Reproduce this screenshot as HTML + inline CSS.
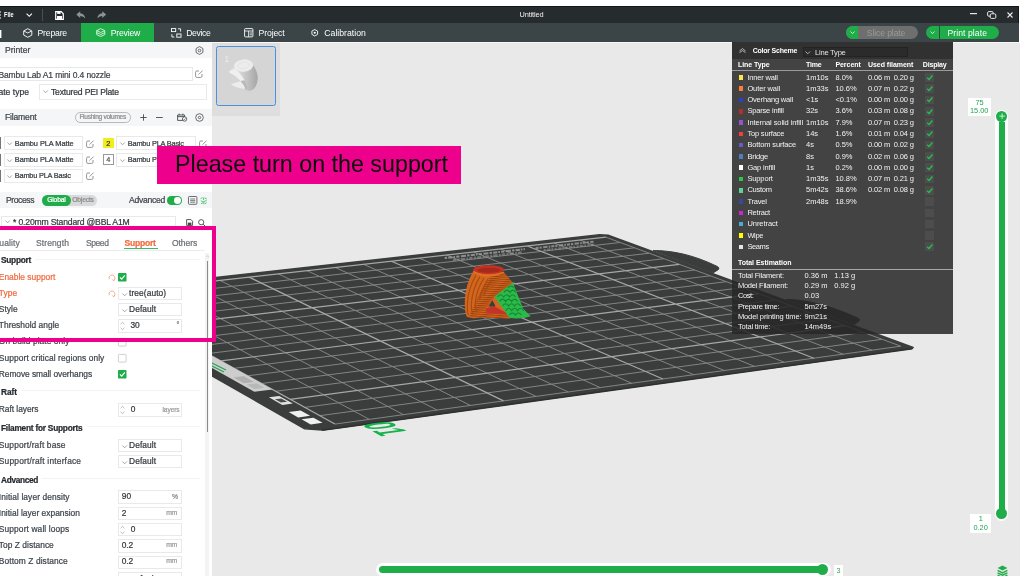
<!DOCTYPE html>
<html lang="en"><head><meta charset="utf-8"><title>Untitled - Bambu Studio</title>
<style>
html,body{margin:0;padding:0}
body{width:1024px;height:576px;overflow:hidden;background:#fff;position:relative;font-family:"Liberation Sans",sans-serif;}
header,aside,main,section,footer{position:absolute;left:0;top:0;width:0;height:0;will-change:transform}
div,svg,.t{position:absolute}
svg{overflow:visible}
.t{white-space:nowrap;line-height:1}
aside .t{-webkit-text-stroke:0.22px currentColor}
#clip{left:0;top:0;width:1024px;height:576px;overflow:hidden}
</style></head><body><div id="clip">
<main><div style="left:211.6px;top:42.2px;width:808px;height:534px;background:#e9e9e9"></div>
<div style="left:211.6px;top:42.2px;width:808px;height:0.9px;background:#f6f6f6"></div>
<div style="left:211.6px;top:43px;width:68.8px;height:72.6px;background:#dedede"></div>
<div style="left:215.6px;top:46.2px;width:60.2px;height:60px;background:#d5d5d5;border:1.7px solid #4a90e2;border-radius:2.5px;box-sizing:border-box"></div>
<svg style="left:0;top:0" width="300" height="120" viewBox="0 0 300 120"><defs><linearGradient id="tg" x1="0" y1="0" x2="1" y2="0"><stop offset="0" stop-color="#e2e2e2"/><stop offset="0.45" stop-color="#d2d2d2"/><stop offset="1" stop-color="#a6a6a6"/></linearGradient></defs>
<path d="M234 66 L228.6 72 Q236 75.6 240.6 81 L231 84.2 Q236 88.4 243 88.6 Q247 91.4 251 90.6 Q256.4 88.4 257.6 80 Q258.4 72 253 65 Z" fill="url(#tg)"/>
<path d="M228.6 72 L234.4 68.4 Q241 73 244.6 80.6 L240.6 81 Q236 75.6 228.6 72 Z" fill="#efefef"/>
<path d="M231 84.2 L240.6 81 Q244 84.4 245.4 88.8 Q237 88.6 231 84.2 Z" fill="#ececec"/>
<path d="M240.6 81 L244.6 80.6 Q247 84.6 247.4 89.6 L245.4 88.8 Q244 84.4 240.6 81 Z" fill="#b9b9b9"/>
<ellipse cx="243.6" cy="65.6" rx="9.6" ry="6.2" transform="rotate(-4 243.6 65.6)" fill="#ececec"/>
<ellipse cx="243.6" cy="65.4" rx="5.4" ry="3.2" transform="rotate(-4 243.6 65.4)" fill="none" stroke="#e2e2e2" stroke-width="0.8"/></svg>
<svg style="left:0;top:0" width="1024" height="576" viewBox="0 0 1024 576"><path d="M75.0 293.2 L599.6 234.9 L608.7 235.4 L913.1 347.5 L912.3 348.3 L322.1 429.9 L304.8 428.7 L70.4 295.4 Z" fill="#3b3d3d" stroke="#3b3d3d" stroke-width="1.6" stroke-linejoin="round"/><path d="M322.1 430.3 L912.3 348.7" stroke="#2f3131" stroke-width="1.6"/><path d="M653 250.6 C670 250.4 692 254 717.6 266.6 Q719.6 267.6 718.6 269.4 L713 273 Z" fill="#3b3d3d" stroke="#3b3d3d" stroke-width="1" stroke-linejoin="round"/><path d="M786 299.4 C806 299.4 832 306 858 318.2 Q860.4 319.2 859 321 L854.4 324.6 Z" fill="#3b3d3d" stroke="#3b3d3d" stroke-width="1" stroke-linejoin="round"/><path d="M130.3 290.4 L369.4 419.4 M111.1 300.0 L620.2 242.5 M160.4 287.0 L403.5 414.7 M122.4 306.3 L634.6 247.8 M190.3 283.7 L437.2 410.1 M134.0 312.7 L649.2 253.2 M219.9 280.4 L470.5 405.5 M145.8 319.2 L664.1 258.7 M278.1 273.8 L536.0 396.4 M169.9 332.6 L694.7 270.0 M306.9 270.6 L568.3 392.0 M182.3 339.5 L710.3 275.8 M335.3 267.5 L600.2 387.6 M194.9 346.5 L726.2 281.7 M363.5 264.3 L631.7 383.3 M207.8 353.6 L742.3 287.7 M419.1 258.1 L693.7 374.7 M234.2 368.3 L775.5 299.9 M446.5 255.0 L724.3 370.5 M247.8 375.8 L792.4 306.2 M473.7 252.0 L754.5 366.4 M261.6 383.5 L809.7 312.6 M500.6 249.0 L784.3 362.3 M275.7 391.3 L827.3 319.1 M553.8 243.0 L843.2 354.2 M304.7 407.4 L863.4 332.4 M580.0 240.1 L872.1 350.2 M319.7 415.7 L881.9 339.3 M605.9 237.2 L900.8 346.2 M334.9 424.1 L900.8 346.2" fill="none" stroke="#868888" stroke-width="0.95"/><path d="M99.9 293.8 L334.9 424.1 M99.9 293.8 L605.9 237.2 M249.1 277.1 L503.5 400.9 M157.7 325.9 L679.3 264.3 M391.4 261.2 L662.9 379.0 M220.9 360.9 L758.8 293.7 M527.3 246.0 L813.9 358.2 M290.1 399.3 L845.2 325.7" fill="none" stroke="#a6a8a8" stroke-width="1.2"/><path d="M189.9 355.5 L207.3 353.3 L272.4 389.4 L254.3 391.8 Z" fill="#cdcdcd"/><path d="M233.5 377.4 L243.6 376.1 L254.0 381.9 L243.8 383.2 Z" fill="#b0b0b0"/><path d="M246.4 384.6 L256.6 383.3 L264.5 387.7 L254.2 389.1 Z" fill="#b8b8b8"/><path d="M268.9 397.3 L279.2 395.9 L292.9 403.5 L282.4 404.9 Z" fill="#e2e2e2"/><path d="M274.9 399.3 L281.3 398.4 L287.3 401.8 L280.8 402.6 Z" fill="#4a4c4c"/><path d="M288.7 412.1 L300.6 410.5 L310.1 415.8 L298.2 417.4 Z" fill="#f0f0f0"/><path d="M301.6 419.3 L313.5 417.7 L322.6 422.8 L310.7 424.5 Z" fill="#f0f0f0"/><path d="M211 362.6 L226 370 M211 365.6 L224 372" stroke="#22a24e" stroke-width="1.1"/><path d="M444.7 258.1 L524.9 249.1" stroke="#a2a4a4" stroke-width="2" stroke-dasharray="2.4 1.2 4.2 1 1.6 1.2 3.2 1.6 5 1.2" opacity="0.8"/><path d="M452.9 260.1 L522.9 252.2" stroke="#a2a4a4" stroke-width="2" stroke-dasharray="3.4 1.4 2 1 4.4 1.4 1.6 1.2" opacity="0.55"/><path d="M535.6 248.2 L593.5 241.7" stroke="#a2a4a4" stroke-width="2" stroke-dasharray="3 1 2.2 1.4 4.4 1.2 1.6 1" opacity="0.75"/><path d="M543.8 250.1 L594.3 244.5" stroke="#a2a4a4" stroke-width="2" stroke-dasharray="2 1.2 3.6 1 1.6 1.6" opacity="0.5"/><text transform="matrix(0.95 0.55 -2.05 0.27 360.6 424.4)" x="0" y="0" font-family="Liberation Sans, sans-serif" font-size="20" font-weight="700" fill="#14b24c">01</text></svg>
<svg style="left:0;top:0" width="1024" height="576" viewBox="0 0 1024 576">
<defs>
<pattern id="st" width="4" height="2.15" patternUnits="userSpaceOnUse" patternTransform="rotate(4)"><rect width="4" height="1.05" fill="#8f3a0c"/></pattern>
<clipPath id="cr"><path d="M490 276 L504 272.6 L513.2 283.2 L494.4 296.8 L486 308.4 L486.4 313.6 L509.4 314.4 L510 318.6 L480 317.6 L469 317.4 L474.6 304 L482 289 Z"/></clipPath>
</defs>
<path d="M473.6 270.6 Q465.4 285 464.8 300 Q464.6 312 466.6 316.6 Q471 319.4 480 317.6 L510 318.6 L513.4 283.6 L504 272.4 Z" fill="#d2661f"/>
<g clip-path="url(#cr)"><rect x="460" y="268" width="60" height="54" fill="url(#st)" opacity="0.8"/></g>
<path d="M476 275 Q468.4 288 467.4 303 Q467 311 468.4 315 M480 276.6 Q472.4 289 471.4 303 Q471 310 472.6 314 M484 278 Q476.4 290 475.4 302 Q475 308 476.6 311 M488 279 Q480.6 291 479.6 300 M492 279.4 Q485 289 484 296" fill="none" stroke="#a84a10" stroke-width="1.1"/>
<ellipse cx="488.6" cy="269.6" rx="15.4" ry="4.3" fill="#c6321f"/>
<ellipse cx="488.8" cy="270.2" rx="11.6" ry="2.5" fill="#a52a1c"/>
<path d="M473.4 271.6 Q488 279.6 504 272.2" fill="none" stroke="#dd7428" stroke-width="1.3"/>
<path d="M485.8 308.6 L493.8 306 L509.4 314.4 L486.4 313.6 Z" fill="#c5322a"/>
<path d="M492.4 300.2 L495.6 306.2 L488.4 306.6 Z" fill="#3a3c3c"/>
<path d="M512.8 282.6 L494.4 296.8 L509.6 318 Q522 319.4 530.6 316.2 L523 308.6 Z" fill="#2bba4a"/>
<path d="M497.6 297 q3-4.6 6 0 q3-4.6 6 0 q3-4.6 6 0 M499.6 301.4 q3-4.6 6 0 q3-4.6 6 0 q3-4.6 6 0 M502.6 306 q3-4.6 6 0 q3-4.6 6 0 q3-4.6 6 0 M505.6 310.6 q3-4.6 6 0 q3-4.6 6 0 q3-4.6 6 0 M504 292.4 q3-4.6 6 0 q3-4.6 6 0 M509.4 315 q3-4 6 0 q3-4 6 0 M508 288 q3-4 6 0" fill="none" stroke="#12862f" stroke-width="1.1"/>
</svg>
<div style="left:967.8px;top:97.8px;width:23.1px;height:17.8px;background:#fff"></div>
<div style="left:994.7px;top:109.6px;width:13.4px;height:411px;background:#fdfdfd;border-radius:6.7px"></div>
<div style="left:998.7px;top:122.4px;width:6.4px;height:388px;background:#1fad4a"></div>
<div style="left:996.3px;top:110.8px;width:10.8px;height:10.8px;background:#1fad4a;border-radius:50%"></div>
<svg style="left:998.6px;top:113.1px;" width="6.2" height="6.2" viewBox="0 0 6.2 6.2"><path d="M3.1 0.3 V5.9 M0.3 3.1 H5.9" stroke="#d9f3e0" stroke-width="0.9"/></svg>
<div style="left:996.1px;top:508.2px;width:11.2px;height:11.2px;background:#1fad4a;border-radius:50%"></div>
<div style="left:969.7px;top:514px;width:21.2px;height:18.6px;background:#fff"></div>
<svg style="left:996.8px;top:564.6px;" width="11" height="12" viewBox="0 0 11 12"><path d="M5.5 0.6 L10.4 3 L5.5 5.4 L0.6 3 Z" fill="#1fad4a"/><path d="M0.6 5.4 L5.5 7.8 L10.4 5.4 M0.6 7.8 L5.5 10.2 L10.4 7.8 M0.6 10.2 L5.5 12.6 L10.4 10.2" fill="none" stroke="#1fad4a" stroke-width="1.5"/></svg>
<div style="left:375.6px;top:563.4px;width:455px;height:13px;background:#fff;border-radius:6.5px"></div>
<div style="left:378.8px;top:566.4px;width:442px;height:6.9px;background:#1fad4a;border-radius:3.5px"></div>
<div style="left:817px;top:564.1px;width:11.4px;height:11.4px;background:#1fad4a;border-radius:50%"></div>
<div style="left:833.8px;top:564.6px;width:9.2px;height:12px;background:#fff"></div>
<span class="t" style="left:224.6px;top:55.09px;font-size:8.4px;color:#ededed">1</span>
<span class="t" style="left:979.6px;top:99.44px;font-size:7.4px;color:#21a34f;transform:translateX(-50%)">75</span>
<span class="t" style="left:979.2px;top:107.44px;font-size:7.4px;color:#21a34f;transform:translateX(-50%)">15.00</span>
<span class="t" style="left:980.8px;top:514.64px;font-size:7.4px;color:#21a34f;transform:translateX(-50%)">1</span>
<span class="t" style="left:980.6px;top:523.54px;font-size:7.4px;color:#21a34f;transform:translateX(-50%)">0.20</span>
<span class="t" style="left:838.4px;top:567.11px;font-size:7.2px;color:#2aa956;transform:translateX(-50%)">3</span></main>
<section><div style="left:732.2px;top:42.2px;width:220.7px;height:291.9px;background:rgba(40,40,40,0.858)"></div>
<div style="left:732.2px;top:42.2px;width:220.7px;height:16.6px;background:rgba(30,30,30,0.5)"></div>
<svg style="left:738.8px;top:47.6px;" width="7" height="5" viewBox="0 0 7 5"><path d="M0.5 3 L3.5 0.6 L6.5 3 M0.5 4.6 L3.5 2.6 L6.5 4.6" fill="none" stroke="#cfcfcf" stroke-width="0.8"/></svg>
<div style="left:803px;top:47.2px;width:105px;height:10px;background:#2b2b2b;border:0.6px solid #232323;box-sizing:border-box"></div>
<svg style="left:805.4px;top:50.6px;" width="5.6" height="3.6" viewBox="0 0 5.6 3.6"><path d="M0.5 0.5 L2.8 2.8 L5.1 0.5" fill="none" stroke="#d0d0d0" stroke-width="0.8"/></svg>
<div style="left:732.2px;top:70px;width:220.7px;height:0.9px;background:#9a9a9a"></div>
<div style="left:738.6px;top:75.2px;width:4.5px;height:4.5px;background:#ffe64d"></div>
<div style="left:924.8px;top:73.1px;width:8.8px;height:8.6px;background:#4d4d4d"></div>
<svg style="left:925.8px;top:73.7px;" width="7.4" height="7.4" viewBox="0 0 7.4 7.4"><path d="M1.2 3.7 L3 5.5 L6.4 1.5" fill="none" stroke="#22c24e" stroke-width="1.3"/></svg>
<div style="left:738.6px;top:86.487px;width:4.5px;height:4.5px;background:#ff7d38"></div>
<div style="left:924.8px;top:84.387px;width:8.8px;height:8.6px;background:#4d4d4d"></div>
<svg style="left:925.8px;top:84.987px;" width="7.4" height="7.4" viewBox="0 0 7.4 7.4"><path d="M1.2 3.7 L3 5.5 L6.4 1.5" fill="none" stroke="#22c24e" stroke-width="1.3"/></svg>
<div style="left:738.6px;top:97.774px;width:4.5px;height:4.5px;background:#2a3fd0"></div>
<div style="left:924.8px;top:95.674px;width:8.8px;height:8.6px;background:#4d4d4d"></div>
<svg style="left:925.8px;top:96.274px;" width="7.4" height="7.4" viewBox="0 0 7.4 7.4"><path d="M1.2 3.7 L3 5.5 L6.4 1.5" fill="none" stroke="#22c24e" stroke-width="1.3"/></svg>
<div style="left:738.6px;top:109.061px;width:4.5px;height:4.5px;background:#b03029"></div>
<div style="left:924.8px;top:106.961px;width:8.8px;height:8.6px;background:#4d4d4d"></div>
<svg style="left:925.8px;top:107.561px;" width="7.4" height="7.4" viewBox="0 0 7.4 7.4"><path d="M1.2 3.7 L3 5.5 L6.4 1.5" fill="none" stroke="#22c24e" stroke-width="1.3"/></svg>
<div style="left:738.6px;top:120.348px;width:4.5px;height:4.5px;background:#9654cc"></div>
<div style="left:924.8px;top:118.248px;width:8.8px;height:8.6px;background:#4d4d4d"></div>
<svg style="left:925.8px;top:118.848px;" width="7.4" height="7.4" viewBox="0 0 7.4 7.4"><path d="M1.2 3.7 L3 5.5 L6.4 1.5" fill="none" stroke="#22c24e" stroke-width="1.3"/></svg>
<div style="left:738.6px;top:131.635px;width:4.5px;height:4.5px;background:#f04040"></div>
<div style="left:924.8px;top:129.535px;width:8.8px;height:8.6px;background:#4d4d4d"></div>
<svg style="left:925.8px;top:130.135px;" width="7.4" height="7.4" viewBox="0 0 7.4 7.4"><path d="M1.2 3.7 L3 5.5 L6.4 1.5" fill="none" stroke="#22c24e" stroke-width="1.3"/></svg>
<div style="left:738.6px;top:142.922px;width:4.5px;height:4.5px;background:#665cc7"></div>
<div style="left:924.8px;top:140.822px;width:8.8px;height:8.6px;background:#4d4d4d"></div>
<svg style="left:925.8px;top:141.422px;" width="7.4" height="7.4" viewBox="0 0 7.4 7.4"><path d="M1.2 3.7 L3 5.5 L6.4 1.5" fill="none" stroke="#22c24e" stroke-width="1.3"/></svg>
<div style="left:738.6px;top:154.209px;width:4.5px;height:4.5px;background:#4d80ba"></div>
<div style="left:924.8px;top:152.109px;width:8.8px;height:8.6px;background:#4d4d4d"></div>
<svg style="left:925.8px;top:152.709px;" width="7.4" height="7.4" viewBox="0 0 7.4 7.4"><path d="M1.2 3.7 L3 5.5 L6.4 1.5" fill="none" stroke="#22c24e" stroke-width="1.3"/></svg>
<div style="left:738.6px;top:165.496px;width:4.5px;height:4.5px;background:#ffffff"></div>
<div style="left:924.8px;top:163.396px;width:8.8px;height:8.6px;background:#4d4d4d"></div>
<svg style="left:925.8px;top:163.996px;" width="7.4" height="7.4" viewBox="0 0 7.4 7.4"><path d="M1.2 3.7 L3 5.5 L6.4 1.5" fill="none" stroke="#22c24e" stroke-width="1.3"/></svg>
<div style="left:738.6px;top:176.783px;width:4.5px;height:4.5px;background:#2cc840"></div>
<div style="left:924.8px;top:174.683px;width:8.8px;height:8.6px;background:#4d4d4d"></div>
<svg style="left:925.8px;top:175.283px;" width="7.4" height="7.4" viewBox="0 0 7.4 7.4"><path d="M1.2 3.7 L3 5.5 L6.4 1.5" fill="none" stroke="#22c24e" stroke-width="1.3"/></svg>
<div style="left:738.6px;top:188.07px;width:4.5px;height:4.5px;background:#5ed194"></div>
<div style="left:924.8px;top:185.97px;width:8.8px;height:8.6px;background:#4d4d4d"></div>
<svg style="left:925.8px;top:186.57px;" width="7.4" height="7.4" viewBox="0 0 7.4 7.4"><path d="M1.2 3.7 L3 5.5 L6.4 1.5" fill="none" stroke="#22c24e" stroke-width="1.3"/></svg>
<div style="left:738.6px;top:199.357px;width:4.5px;height:4.5px;background:#38489b"></div>
<div style="left:924.8px;top:197.257px;width:8.8px;height:8.6px;background:#4d4d4d"></div>
<div style="left:738.6px;top:210.644px;width:4.5px;height:4.5px;background:#cd22d6"></div>
<div style="left:924.8px;top:208.544px;width:8.8px;height:8.6px;background:#4d4d4d"></div>
<div style="left:738.6px;top:221.931px;width:4.5px;height:4.5px;background:#49adcf"></div>
<div style="left:924.8px;top:219.831px;width:8.8px;height:8.6px;background:#4d4d4d"></div>
<div style="left:738.6px;top:233.218px;width:4.5px;height:4.5px;background:#ffff00"></div>
<div style="left:924.8px;top:231.118px;width:8.8px;height:8.6px;background:#4d4d4d"></div>
<div style="left:738.6px;top:244.505px;width:4.5px;height:4.5px;background:#e6e6e6"></div>
<div style="left:924.8px;top:242.405px;width:8.8px;height:8.6px;background:#4d4d4d"></div>
<svg style="left:925.8px;top:243.005px;" width="7.4" height="7.4" viewBox="0 0 7.4 7.4"><path d="M1.2 3.7 L3 5.5 L6.4 1.5" fill="none" stroke="#22c24e" stroke-width="1.3"/></svg>
<div style="left:732.2px;top:268.5px;width:220.7px;height:0.9px;background:#a8a8a8"></div>
<span class="t" style="left:752.7px;top:46.97px;font-size:7px;color:#fff;font-weight:700;letter-spacing:-0.223px">Color Scheme</span>
<span class="t" style="left:815px;top:48.97px;font-size:7.6px;color:#e0e0e0;letter-spacing:-0.244px">Line Type</span>
<span class="t" style="left:737.9px;top:61.37px;font-size:7px;color:#fff;font-weight:700;letter-spacing:-0.040px">Line Type</span>
<span class="t" style="left:806px;top:61.37px;font-size:7px;color:#fff;font-weight:700;letter-spacing:-0.205px">Time</span>
<span class="t" style="left:835.4px;top:61.37px;font-size:7px;color:#fff;font-weight:700;letter-spacing:-0.041px">Percent</span>
<span class="t" style="left:868px;top:61.37px;font-size:7px;color:#fff;font-weight:700;letter-spacing:-0.039px">Used filament</span>
<span class="t" style="left:922.8px;top:61.37px;font-size:7px;color:#fff;font-weight:700;letter-spacing:-0.158px">Display</span>
<span class="t" style="left:747.4px;top:73.55px;font-size:7.5px;color:#f2f2f2;letter-spacing:-0.171px">Inner wall</span>
<span class="t" style="left:806px;top:73.55px;font-size:7.5px;color:#f2f2f2">1m10s</span>
<span class="t" style="left:835.4px;top:73.55px;font-size:7.5px;color:#f2f2f2">8.0%</span>
<span class="t" style="left:868px;top:73.55px;font-size:7.5px;color:#f2f2f2;letter-spacing:-0.156px">0.06 m</span>
<span class="t" style="left:893.8px;top:73.55px;font-size:7.5px;color:#f2f2f2;letter-spacing:-0.143px">0.20 g</span>
<span class="t" style="left:747.4px;top:84.84px;font-size:7.5px;color:#f2f2f2;letter-spacing:-0.117px">Outer wall</span>
<span class="t" style="left:806px;top:84.84px;font-size:7.5px;color:#f2f2f2">1m33s</span>
<span class="t" style="left:835.4px;top:84.84px;font-size:7.5px;color:#f2f2f2">10.6%</span>
<span class="t" style="left:868px;top:84.84px;font-size:7.5px;color:#f2f2f2;letter-spacing:-0.156px">0.07 m</span>
<span class="t" style="left:893.8px;top:84.84px;font-size:7.5px;color:#f2f2f2;letter-spacing:-0.143px">0.22 g</span>
<span class="t" style="left:747.4px;top:96.13px;font-size:7.5px;color:#f2f2f2;letter-spacing:-0.181px">Overhang wall</span>
<span class="t" style="left:806px;top:96.13px;font-size:7.5px;color:#f2f2f2">&lt;1s</span>
<span class="t" style="left:835.4px;top:96.13px;font-size:7.5px;color:#f2f2f2">&lt;0.1%</span>
<span class="t" style="left:868px;top:96.13px;font-size:7.5px;color:#f2f2f2;letter-spacing:-0.156px">0.00 m</span>
<span class="t" style="left:893.8px;top:96.13px;font-size:7.5px;color:#f2f2f2;letter-spacing:-0.143px">0.00 g</span>
<span class="t" style="left:747.4px;top:107.41px;font-size:7.5px;color:#f2f2f2;letter-spacing:-0.183px">Sparse infill</span>
<span class="t" style="left:806px;top:107.41px;font-size:7.5px;color:#f2f2f2">32s</span>
<span class="t" style="left:835.4px;top:107.41px;font-size:7.5px;color:#f2f2f2">3.6%</span>
<span class="t" style="left:868px;top:107.41px;font-size:7.5px;color:#f2f2f2;letter-spacing:-0.156px">0.03 m</span>
<span class="t" style="left:893.8px;top:107.41px;font-size:7.5px;color:#f2f2f2;letter-spacing:-0.143px">0.08 g</span>
<span class="t" style="left:747.4px;top:118.70px;font-size:7.5px;color:#f2f2f2;letter-spacing:-0.092px">Internal solid infill</span>
<span class="t" style="left:806px;top:118.70px;font-size:7.5px;color:#f2f2f2">1m10s</span>
<span class="t" style="left:835.4px;top:118.70px;font-size:7.5px;color:#f2f2f2">7.9%</span>
<span class="t" style="left:868px;top:118.70px;font-size:7.5px;color:#f2f2f2;letter-spacing:-0.156px">0.07 m</span>
<span class="t" style="left:893.8px;top:118.70px;font-size:7.5px;color:#f2f2f2;letter-spacing:-0.143px">0.23 g</span>
<span class="t" style="left:747.4px;top:129.99px;font-size:7.5px;color:#f2f2f2;letter-spacing:-0.180px">Top surface</span>
<span class="t" style="left:806px;top:129.99px;font-size:7.5px;color:#f2f2f2">14s</span>
<span class="t" style="left:835.4px;top:129.99px;font-size:7.5px;color:#f2f2f2">1.6%</span>
<span class="t" style="left:868px;top:129.99px;font-size:7.5px;color:#f2f2f2;letter-spacing:-0.156px">0.01 m</span>
<span class="t" style="left:893.8px;top:129.99px;font-size:7.5px;color:#f2f2f2;letter-spacing:-0.143px">0.04 g</span>
<span class="t" style="left:747.4px;top:141.27px;font-size:7.5px;color:#f2f2f2;letter-spacing:-0.132px">Bottom surface</span>
<span class="t" style="left:806px;top:141.27px;font-size:7.5px;color:#f2f2f2">4s</span>
<span class="t" style="left:835.4px;top:141.27px;font-size:7.5px;color:#f2f2f2">0.5%</span>
<span class="t" style="left:868px;top:141.27px;font-size:7.5px;color:#f2f2f2;letter-spacing:-0.156px">0.00 m</span>
<span class="t" style="left:893.8px;top:141.27px;font-size:7.5px;color:#f2f2f2;letter-spacing:-0.143px">0.02 g</span>
<span class="t" style="left:747.4px;top:152.56px;font-size:7.5px;color:#f2f2f2;letter-spacing:-0.181px">Bridge</span>
<span class="t" style="left:806px;top:152.56px;font-size:7.5px;color:#f2f2f2">8s</span>
<span class="t" style="left:835.4px;top:152.56px;font-size:7.5px;color:#f2f2f2">0.9%</span>
<span class="t" style="left:868px;top:152.56px;font-size:7.5px;color:#f2f2f2;letter-spacing:-0.156px">0.02 m</span>
<span class="t" style="left:893.8px;top:152.56px;font-size:7.5px;color:#f2f2f2;letter-spacing:-0.143px">0.06 g</span>
<span class="t" style="left:747.4px;top:163.85px;font-size:7.5px;color:#f2f2f2;letter-spacing:-0.159px">Gap infill</span>
<span class="t" style="left:806px;top:163.85px;font-size:7.5px;color:#f2f2f2">1s</span>
<span class="t" style="left:835.4px;top:163.85px;font-size:7.5px;color:#f2f2f2">0.2%</span>
<span class="t" style="left:868px;top:163.85px;font-size:7.5px;color:#f2f2f2;letter-spacing:-0.156px">0.00 m</span>
<span class="t" style="left:893.8px;top:163.85px;font-size:7.5px;color:#f2f2f2;letter-spacing:-0.143px">0.00 g</span>
<span class="t" style="left:747.4px;top:175.13px;font-size:7.5px;color:#f2f2f2;letter-spacing:-0.126px">Support</span>
<span class="t" style="left:806px;top:175.13px;font-size:7.5px;color:#f2f2f2">1m35s</span>
<span class="t" style="left:835.4px;top:175.13px;font-size:7.5px;color:#f2f2f2">10.8%</span>
<span class="t" style="left:868px;top:175.13px;font-size:7.5px;color:#f2f2f2;letter-spacing:-0.156px">0.07 m</span>
<span class="t" style="left:893.8px;top:175.13px;font-size:7.5px;color:#f2f2f2;letter-spacing:-0.143px">0.21 g</span>
<span class="t" style="left:747.4px;top:186.42px;font-size:7.5px;color:#f2f2f2;letter-spacing:-0.241px">Custom</span>
<span class="t" style="left:806px;top:186.42px;font-size:7.5px;color:#f2f2f2">5m42s</span>
<span class="t" style="left:835.4px;top:186.42px;font-size:7.5px;color:#f2f2f2">38.6%</span>
<span class="t" style="left:868px;top:186.42px;font-size:7.5px;color:#f2f2f2;letter-spacing:-0.156px">0.02 m</span>
<span class="t" style="left:893.8px;top:186.42px;font-size:7.5px;color:#f2f2f2;letter-spacing:-0.143px">0.08 g</span>
<span class="t" style="left:747.4px;top:197.71px;font-size:7.5px;color:#f2f2f2;letter-spacing:-0.227px">Travel</span>
<span class="t" style="left:806px;top:197.71px;font-size:7.5px;color:#f2f2f2">2m48s</span>
<span class="t" style="left:835.4px;top:197.71px;font-size:7.5px;color:#f2f2f2">18.9%</span>
<span class="t" style="left:747.4px;top:209.00px;font-size:7.5px;color:#f2f2f2;letter-spacing:-0.227px">Retract</span>
<span class="t" style="left:747.4px;top:220.28px;font-size:7.5px;color:#f2f2f2;letter-spacing:-0.049px">Unretract</span>
<span class="t" style="left:747.4px;top:231.57px;font-size:7.5px;color:#f2f2f2;letter-spacing:-0.373px">Wipe</span>
<span class="t" style="left:747.4px;top:242.86px;font-size:7.5px;color:#f2f2f2;letter-spacing:-0.389px">Seams</span>
<span class="t" style="left:737.9px;top:258.87px;font-size:7px;color:#fff;font-weight:700;letter-spacing:-0.021px">Total Estimation</span>
<span class="t" style="left:737.9px;top:271.85px;font-size:7.5px;color:#f2f2f2;letter-spacing:-0.185px">Total Filament:</span>
<span class="t" style="left:804.5px;top:271.85px;font-size:7.5px;color:#f2f2f2">0.36 m</span>
<span class="t" style="left:834.3px;top:271.85px;font-size:7.5px;color:#f2f2f2">1.13 g</span>
<span class="t" style="left:737.9px;top:282.05px;font-size:7.5px;color:#f2f2f2;letter-spacing:-0.224px">Model Filament:</span>
<span class="t" style="left:804.5px;top:282.05px;font-size:7.5px;color:#f2f2f2">0.29 m</span>
<span class="t" style="left:834.3px;top:282.05px;font-size:7.5px;color:#f2f2f2">0.92 g</span>
<span class="t" style="left:737.9px;top:292.25px;font-size:7.5px;color:#f2f2f2;letter-spacing:-0.383px">Cost:</span>
<span class="t" style="left:804.5px;top:292.25px;font-size:7.5px;color:#f2f2f2">0.03</span>
<span class="t" style="left:737.9px;top:302.55px;font-size:7.5px;color:#f2f2f2;letter-spacing:-0.279px">Prepare time:</span>
<span class="t" style="left:804.5px;top:302.55px;font-size:7.5px;color:#f2f2f2">5m27s</span>
<span class="t" style="left:737.9px;top:312.95px;font-size:7.5px;color:#f2f2f2;letter-spacing:-0.093px">Model printing time:</span>
<span class="t" style="left:804.5px;top:312.95px;font-size:7.5px;color:#f2f2f2">9m21s</span>
<span class="t" style="left:737.9px;top:322.95px;font-size:7.5px;color:#f2f2f2;letter-spacing:-0.163px">Total time:</span>
<span class="t" style="left:804.5px;top:322.95px;font-size:7.5px;color:#f2f2f2">14m49s</span></section>
<aside><div style="left:0px;top:42.2px;width:211.6px;height:534px;background:#fff"></div>
<div style="left:0px;top:42.2px;width:211.6px;height:15.8px;background:#f5f6f7"></div>
<svg style="left:195px;top:45.6px;" width="9" height="9" viewBox="0 0 9 9"><path d="M4.5 0.6 L7.9 2.5 V6.5 L4.5 8.4 L1.1 6.5 V2.5 Z" fill="none" stroke="#5a5f63" stroke-width="0.9" stroke-linejoin="round"/><circle cx="4.5" cy="4.5" r="1.3" fill="none" stroke="#5a5f63" stroke-width="0.9"/></svg>
<div style="left:-4px;top:67.2px;width:196.7px;height:14px;border:0.8px solid #e8e8e8;box-sizing:border-box"></div>
<svg style="left:195px;top:69.6px;" width="8.5" height="8" viewBox="0 0 8.5 8"><path d="M4 1 H1.8 Q0.6 1 0.6 2.2 V6.2 Q0.6 7.4 1.8 7.4 H5.8 Q7 7.4 7 6.2 V4" fill="none" stroke="#8a8a8a" stroke-width="0.9"/><path d="M3.6 4.6 L7.6 0.6" stroke="#8a8a8a" stroke-width="0.9"/></svg>
<div style="left:39px;top:83.8px;width:167.8px;height:16.2px;border:0.8px solid #e9e9e9;box-sizing:border-box"></div>
<svg style="left:43.2px;top:90px;" width="5.2" height="3.8" viewBox="0 0 5.2 3.8"><path d="M0.4 0.5 L2.6 2.8 L4.8 0.5" fill="none" stroke="#9a9a9a" stroke-width="0.9"/></svg>
<div style="left:0px;top:108.8px;width:211.6px;height:17.6px;background:#f5f6f7"></div>
<div style="left:75px;top:112.4px;width:55.6px;height:10.2px;border:0.8px solid #b9b9b9;border-radius:5.2px;box-sizing:border-box"></div>
<svg style="left:139.6px;top:113.6px;" width="7" height="7" viewBox="0 0 7 7"><path d="M3.5 0.3 V6.7 M0.3 3.5 H6.7" stroke="#44494d" stroke-width="0.9"/></svg>
<svg style="left:156.2px;top:116.6px;" width="7" height="1.2" viewBox="0 0 7 1.2"><rect width="6.8" height="0.9" fill="#44494d"/></svg>
<svg style="left:177.2px;top:113.2px;" width="10.5" height="8.6" viewBox="0 0 10.5 8.6"><path d="M0.6 2 H7.6 V7.4 H0.6 Z M0.6 3.6 H7.6 M2.2 0.6 V2 M5.8 0.6 V2" fill="none" stroke="#44494d" stroke-width="0.9"/><circle cx="7.6" cy="6" r="2.2" fill="#f5f6f7" stroke="#44494d" stroke-width="0.8"/><path d="M6.6 6 L7.4 6.8 L8.6 5.3" fill="none" stroke="#44494d" stroke-width="0.6"/></svg>
<svg style="left:195.2px;top:113px;" width="9" height="9" viewBox="0 0 9 9"><circle cx="4.5" cy="4.5" r="3.8" fill="none" stroke="#5a5f63" stroke-width="0.9"/><circle cx="4.5" cy="4.5" r="1.2" fill="none" stroke="#5a5f63" stroke-width="0.9"/></svg>
<div style="left:-1px;top:137.2px;width:1.5px;height:12px;background:#777"></div>
<div style="left:3.5px;top:136.2px;width:79px;height:14px;border:0.8px solid #e9e9e9;box-sizing:border-box"></div>
<svg style="left:7.3px;top:142.4px;" width="5.2" height="3.8" viewBox="0 0 5.2 3.8"><path d="M0.4 0.5 L2.6 2.8 L4.8 0.5" fill="none" stroke="#9a9a9a" stroke-width="0.9"/></svg>
<svg style="left:86.2px;top:139.6px;" width="8.5" height="8" viewBox="0 0 8.5 8"><path d="M4 1 H1.8 Q0.6 1 0.6 2.2 V6.2 Q0.6 7.4 1.8 7.4 H5.8 Q7 7.4 7 6.2 V4" fill="none" stroke="#8a8a8a" stroke-width="0.9"/><path d="M3.6 4.6 L7.6 0.6" stroke="#8a8a8a" stroke-width="0.9"/></svg>
<div style="left:-1px;top:153.5px;width:1.5px;height:12px;background:#777"></div>
<div style="left:3.5px;top:152.5px;width:79px;height:14px;border:0.8px solid #e9e9e9;box-sizing:border-box"></div>
<svg style="left:7.3px;top:158.7px;" width="5.2" height="3.8" viewBox="0 0 5.2 3.8"><path d="M0.4 0.5 L2.6 2.8 L4.8 0.5" fill="none" stroke="#9a9a9a" stroke-width="0.9"/></svg>
<svg style="left:86.2px;top:155.9px;" width="8.5" height="8" viewBox="0 0 8.5 8"><path d="M4 1 H1.8 Q0.6 1 0.6 2.2 V6.2 Q0.6 7.4 1.8 7.4 H5.8 Q7 7.4 7 6.2 V4" fill="none" stroke="#8a8a8a" stroke-width="0.9"/><path d="M3.6 4.6 L7.6 0.6" stroke="#8a8a8a" stroke-width="0.9"/></svg>
<div style="left:-1px;top:169.8px;width:1.5px;height:12px;background:#777"></div>
<div style="left:3.5px;top:168.8px;width:79px;height:14px;border:0.8px solid #e9e9e9;box-sizing:border-box"></div>
<svg style="left:7.3px;top:175px;" width="5.2" height="3.8" viewBox="0 0 5.2 3.8"><path d="M0.4 0.5 L2.6 2.8 L4.8 0.5" fill="none" stroke="#9a9a9a" stroke-width="0.9"/></svg>
<svg style="left:86.2px;top:172.2px;" width="8.5" height="8" viewBox="0 0 8.5 8"><path d="M4 1 H1.8 Q0.6 1 0.6 2.2 V6.2 Q0.6 7.4 1.8 7.4 H5.8 Q7 7.4 7 6.2 V4" fill="none" stroke="#8a8a8a" stroke-width="0.9"/><path d="M3.6 4.6 L7.6 0.6" stroke="#8a8a8a" stroke-width="0.9"/></svg>
<div style="left:102.8px;top:138px;width:11px;height:10.4px;background:#f0ee1c"></div>
<div style="left:102.6px;top:154.2px;width:11.2px;height:10.4px;border:0.8px solid #9a9a9a;box-sizing:border-box;background:#fff"></div>
<div style="left:116.3px;top:136.2px;width:79.3px;height:14px;border:0.8px solid #e9e9e9;box-sizing:border-box"></div>
<svg style="left:120.3px;top:142.4px;" width="5.2" height="3.8" viewBox="0 0 5.2 3.8"><path d="M0.4 0.5 L2.6 2.8 L4.8 0.5" fill="none" stroke="#9a9a9a" stroke-width="0.9"/></svg>
<svg style="left:199.4px;top:139.6px;" width="8.5" height="8" viewBox="0 0 8.5 8"><path d="M4 1 H1.8 Q0.6 1 0.6 2.2 V6.2 Q0.6 7.4 1.8 7.4 H5.8 Q7 7.4 7 6.2 V4" fill="none" stroke="#8a8a8a" stroke-width="0.9"/><path d="M3.6 4.6 L7.6 0.6" stroke="#8a8a8a" stroke-width="0.9"/></svg>
<div style="left:116.3px;top:152.5px;width:79.3px;height:14px;border:0.8px solid #e9e9e9;box-sizing:border-box"></div>
<svg style="left:120.3px;top:158.7px;" width="5.2" height="3.8" viewBox="0 0 5.2 3.8"><path d="M0.4 0.5 L2.6 2.8 L4.8 0.5" fill="none" stroke="#9a9a9a" stroke-width="0.9"/></svg>
<svg style="left:199.4px;top:155.9px;" width="8.5" height="8" viewBox="0 0 8.5 8"><path d="M4 1 H1.8 Q0.6 1 0.6 2.2 V6.2 Q0.6 7.4 1.8 7.4 H5.8 Q7 7.4 7 6.2 V4" fill="none" stroke="#8a8a8a" stroke-width="0.9"/><path d="M3.6 4.6 L7.6 0.6" stroke="#8a8a8a" stroke-width="0.9"/></svg>
<div style="left:0px;top:192.2px;width:211.6px;height:16px;background:#f5f6f7"></div>
<div style="left:42.2px;top:195px;width:54.8px;height:10.8px;background:#dadada;border-radius:5.4px"></div>
<div style="left:42.2px;top:195px;width:28.5px;height:10.8px;background:#1fad4a;border-radius:5.4px"></div>
<div style="left:166.6px;top:196px;width:15.4px;height:8.6px;background:#1fad4a;border-radius:4.3px"></div>
<div style="left:174.3px;top:196.9px;width:6.8px;height:6.8px;background:#fff;border-radius:50%"></div>
<svg style="left:188.4px;top:196px;" width="9.6" height="9" viewBox="0 0 9.6 9"><rect x="0.5" y="0.5" width="8.4" height="7.8" rx="0.8" fill="none" stroke="#5a5f63" stroke-width="0.9"/><path d="M2.2 3 H7.2 M2.2 4.6 H7.2 M2.2 6.2 H7.2" stroke="#5a5f63" stroke-width="0.8"/></svg>
<svg style="left:200px;top:196.6px;" width="7.6" height="7.6" viewBox="0 0 7.6 7.6"><path d="M0.6 1.6 L2.6 0.6 M4.6 0.8 L6.8 2 M0.8 3.8 L3 5 L6.6 3.4 M1 6.8 L2.8 5.8 M4.8 6.8 L6.8 5.6 M3.6 0.6 V3 M3.8 5 V7.2" stroke="#3fbf63" stroke-width="0.9" fill="none"/></svg>
<div style="left:1.2px;top:215.8px;width:174.8px;height:14px;border:0.8px solid #e9e9e9;box-sizing:border-box"></div>
<svg style="left:5px;top:220.4px;" width="5.2" height="3.8" viewBox="0 0 5.2 3.8"><path d="M0.4 0.5 L2.6 2.8 L4.8 0.5" fill="none" stroke="#9a9a9a" stroke-width="0.9"/></svg>
<svg style="left:185.6px;top:219px;" width="7.4" height="7" viewBox="0 0 7.4 7"><path d="M0.6 0.6 H5 L6.6 2.2 V6.4 H0.6 Z" fill="none" stroke="#44494d" stroke-width="0.9"/><rect x="1.8" y="3.6" width="3.6" height="2.8" fill="#44494d"/></svg>
<svg style="left:198px;top:218.6px;" width="8" height="8" viewBox="0 0 8 8"><circle cx="3.2" cy="3.2" r="2.6" fill="none" stroke="#44494d" stroke-width="0.9"/><path d="M5.2 5.2 L7.4 7.4" stroke="#44494d" stroke-width="1"/></svg>
<div style="left:123.8px;top:247.5px;width:33.8px;height:1px;background:#3fb863"></div>
<div style="left:0px;top:249.6px;width:205px;height:0.7px;background:#ececec"></div>
<div style="left:205.2px;top:252.5px;width:4px;height:324px;background:#f3f3f3"></div>
<div style="left:207px;top:261px;width:1.4px;height:170.5px;background:#8a8a8a"></div>
<svg style="left:205.6px;top:254.5px;" width="3.4" height="3" viewBox="0 0 3.4 3"><path d="M0.3 2.4 L1.7 0.6 L3.1 2.4" fill="none" stroke="#bbb" stroke-width="0.6"/></svg>
<div style="left:35px;top:258.8px;width:165px;height:0.7px;background:#f3f3f3"></div>
<svg style="left:107.8px;top:273.6px;" width="8" height="8" viewBox="0 0 8 8"><path d="M1.2 5.2 A3 3 0 1 1 5.6 6.6" fill="none" stroke="#f4a58c" stroke-width="0.9"/><path d="M4.3 5.6 L5.8 6.8 L6.6 5" fill="none" stroke="#f4a58c" stroke-width="0.9"/></svg>
<svg style="left:118.2px;top:273px;" width="8.5" height="8.5" viewBox="0 0 8.5 8.5"><rect x="0" y="0" width="8.5" height="8.5" rx="0.8" fill="#1fad4a"/><path d="M1.9 4.4 L3.7 6.2 L6.8 2.4" fill="none" stroke="#fff" stroke-width="1.1"/></svg>
<svg style="left:107.8px;top:290px;" width="8" height="8" viewBox="0 0 8 8"><path d="M1.2 5.2 A3 3 0 1 1 5.6 6.6" fill="none" stroke="#f4a58c" stroke-width="0.9"/><path d="M4.3 5.6 L5.8 6.8 L6.6 5" fill="none" stroke="#f4a58c" stroke-width="0.9"/></svg>
<div style="left:117.6px;top:286.8px;width:64.6px;height:13.4px;border:0.8px solid #e9e9e9;box-sizing:border-box"></div>
<svg style="left:121.8px;top:292.6px;" width="5.2" height="3.8" viewBox="0 0 5.2 3.8"><path d="M0.4 0.5 L2.6 2.8 L4.8 0.5" fill="none" stroke="#9a9a9a" stroke-width="0.9"/></svg>
<div style="left:117.6px;top:303px;width:64.6px;height:13.4px;border:0.8px solid #e9e9e9;box-sizing:border-box"></div>
<svg style="left:121.8px;top:308.8px;" width="5.2" height="3.8" viewBox="0 0 5.2 3.8"><path d="M0.4 0.5 L2.6 2.8 L4.8 0.5" fill="none" stroke="#9a9a9a" stroke-width="0.9"/></svg>
<div style="left:117.6px;top:319.3px;width:64.6px;height:13.4px;border:0.8px solid #e9e9e9;box-sizing:border-box"></div>
<svg style="left:120px;top:321px;" width="5" height="10" viewBox="0 0 5 10"><path d="M0.6 3.4 L2.5 1.2 L4.4 3.4 M0.6 6.6 L2.5 8.8 L4.4 6.6" fill="none" stroke="#b0b0b0" stroke-width="0.8"/></svg>
<svg style="left:118.2px;top:338px;" width="8.5" height="8.5" viewBox="0 0 8.5 8.5"><rect x="0.4" y="0.4" width="7.7" height="7.7" rx="0.8" fill="#fff" stroke="#c4c4c4" stroke-width="0.8"/></svg>
<svg style="left:118.2px;top:354.2px;" width="8.5" height="8.5" viewBox="0 0 8.5 8.5"><rect x="0.4" y="0.4" width="7.7" height="7.7" rx="0.8" fill="#fff" stroke="#c4c4c4" stroke-width="0.8"/></svg>
<svg style="left:118.2px;top:370.2px;" width="8.5" height="8.5" viewBox="0 0 8.5 8.5"><rect x="0" y="0" width="8.5" height="8.5" rx="0.8" fill="#1fad4a"/><path d="M1.9 4.4 L3.7 6.2 L6.8 2.4" fill="none" stroke="#fff" stroke-width="1.1"/></svg>
<div style="left:21px;top:390.2px;width:179px;height:0.7px;background:#f3f3f3"></div>
<div style="left:117.6px;top:403.3px;width:64.6px;height:13.4px;border:0.8px solid #e9e9e9;box-sizing:border-box"></div>
<svg style="left:120px;top:405px;" width="5" height="10" viewBox="0 0 5 10"><path d="M0.6 3.4 L2.5 1.2 L4.4 3.4 M0.6 6.6 L2.5 8.8 L4.4 6.6" fill="none" stroke="#b0b0b0" stroke-width="0.8"/></svg>
<div style="left:86.5px;top:426.4px;width:113.5px;height:0.7px;background:#f3f3f3"></div>
<div style="left:117.6px;top:438.8px;width:64.6px;height:13.4px;border:0.8px solid #e9e9e9;box-sizing:border-box"></div>
<svg style="left:121.8px;top:444.6px;" width="5.2" height="3.8" viewBox="0 0 5.2 3.8"><path d="M0.4 0.5 L2.6 2.8 L4.8 0.5" fill="none" stroke="#9a9a9a" stroke-width="0.9"/></svg>
<div style="left:117.6px;top:455px;width:64.6px;height:13.4px;border:0.8px solid #e9e9e9;box-sizing:border-box"></div>
<svg style="left:121.8px;top:460.8px;" width="5.2" height="3.8" viewBox="0 0 5.2 3.8"><path d="M0.4 0.5 L2.6 2.8 L4.8 0.5" fill="none" stroke="#9a9a9a" stroke-width="0.9"/></svg>
<div style="left:42px;top:478.2px;width:158px;height:0.7px;background:#f3f3f3"></div>
<div style="left:117.6px;top:490.2px;width:64.6px;height:14px;border:0.8px solid #e9e9e9;box-sizing:border-box"></div>
<div style="left:117.6px;top:506.8px;width:64.6px;height:13.4px;border:0.8px solid #e9e9e9;box-sizing:border-box"></div>
<div style="left:117.6px;top:523px;width:64.6px;height:13.4px;border:0.8px solid #e9e9e9;box-sizing:border-box"></div>
<svg style="left:120px;top:524.7px;" width="5" height="10" viewBox="0 0 5 10"><path d="M0.6 3.4 L2.5 1.2 L4.4 3.4 M0.6 6.6 L2.5 8.8 L4.4 6.6" fill="none" stroke="#b0b0b0" stroke-width="0.8"/></svg>
<div style="left:117.6px;top:539.3px;width:64.6px;height:13.4px;border:0.8px solid #e9e9e9;box-sizing:border-box"></div>
<div style="left:117.6px;top:555.5px;width:64.6px;height:13.4px;border:0.8px solid #e9e9e9;box-sizing:border-box"></div>
<div style="left:117.6px;top:572.4px;width:64.6px;height:13.4px;border:0.8px solid #e9e9e9;box-sizing:border-box"></div>
<svg style="left:121.8px;top:578.4px;" width="5.2" height="3.8" viewBox="0 0 5.2 3.8"><path d="M0.4 0.5 L2.6 2.8 L4.8 0.5" fill="none" stroke="#9a9a9a" stroke-width="0.9"/></svg>
<span class="t" style="left:5px;top:46.22px;font-size:8.6px;color:#3f444a;letter-spacing:0.012px">Printer</span>
<span class="t" style="left:-1.6px;top:70.50px;font-size:8.5px;color:#3f444a;letter-spacing:-0.101px">Bambu Lab A1 mini 0.4 nozzle</span>
<span class="t" style="left:-9.2px;top:87.92px;font-size:8.6px;color:#33383d;letter-spacing:-0.002px">Plate type</span>
<span class="t" style="left:51px;top:87.92px;font-size:8.6px;color:#33383d;letter-spacing:-0.188px">Textured PEI Plate</span>
<span class="t" style="left:5px;top:113.22px;font-size:8.6px;color:#3f444a;letter-spacing:-0.182px">Filament</span>
<span class="t" style="left:79.4px;top:114.11px;font-size:6.6px;color:#8c8c8c;letter-spacing:-0.295px">Flushing volumes</span>
<span class="t" style="left:14.8px;top:139.74px;font-size:7.4px;color:#33383d;letter-spacing:-0.059px">Bambu PLA Matte</span>
<span class="t" style="left:14.8px;top:156.04px;font-size:7.4px;color:#33383d;letter-spacing:-0.059px">Bambu PLA Matte</span>
<span class="t" style="left:14.8px;top:172.34px;font-size:7.4px;color:#33383d;letter-spacing:-0.211px">Bambu PLA Basic</span>
<span class="t" style="left:108.3px;top:140.14px;font-size:7.4px;color:#333;transform:translateX(-50%)">2</span>
<span class="t" style="left:108.3px;top:156.34px;font-size:7.4px;color:#555;transform:translateX(-50%)">4</span>
<span class="t" style="left:127.8px;top:139.74px;font-size:7.4px;color:#33383d;letter-spacing:-0.211px">Bambu PLA Basic</span>
<span class="t" style="left:127.8px;top:156.04px;font-size:7.4px;color:#33383d;letter-spacing:-0.211px">Bambu PLA Basic</span>
<span class="t" style="left:6px;top:195.82px;font-size:8.6px;color:#3f444a;letter-spacing:-0.435px">Process</span>
<span class="t" style="left:47.3px;top:197.03px;font-size:6.7px;color:#fff;letter-spacing:-0.191px">Global</span>
<span class="t" style="left:72.2px;top:197.03px;font-size:6.7px;color:#8a8a8a;letter-spacing:-0.153px">Objects</span>
<span class="t" style="left:129px;top:195.82px;font-size:8.6px;color:#3f444a;letter-spacing:-0.279px">Advanced</span>
<span class="t" style="left:13px;top:217.52px;font-size:8.6px;color:#33383d;letter-spacing:-0.160px">* 0.20mm Standard @BBL A1M</span>
<span class="t" style="left:-7.4px;top:238.50px;font-size:8.5px;color:#6b6f73;letter-spacing:0.104px">Quality</span>
<span class="t" style="left:36px;top:238.50px;font-size:8.5px;color:#6b6f73;letter-spacing:0.107px">Strength</span>
<span class="t" style="left:86px;top:238.50px;font-size:8.5px;color:#6b6f73;letter-spacing:-0.419px">Speed</span>
<span class="t" style="left:124.6px;top:238.50px;font-size:8.5px;color:#f1693e;font-weight:700;letter-spacing:-0.225px">Support</span>
<span class="t" style="left:171.9px;top:238.50px;font-size:8.5px;color:#6b6f73;letter-spacing:-0.019px">Others</span>
<span class="t" style="left:1px;top:256.17px;font-size:8.3px;color:#262a2e;font-weight:700;letter-spacing:-0.259px">Support</span>
<span class="t" style="left:-1.2px;top:272.89px;font-size:8.4px;color:#f1693e;letter-spacing:0.018px">Enable support</span>
<span class="t" style="left:-1.2px;top:289.49px;font-size:8.4px;color:#f1693e;letter-spacing:0.061px">Type</span>
<span class="t" style="left:129px;top:289.49px;font-size:8.4px;color:#33383d;letter-spacing:0.089px">tree(auto)</span>
<span class="t" style="left:-1.2px;top:305.49px;font-size:8.4px;color:#3f444a;letter-spacing:0.035px">Style</span>
<span class="t" style="left:129px;top:305.49px;font-size:8.4px;color:#33383d;letter-spacing:0.093px">Default</span>
<span class="t" style="left:-1.2px;top:321.29px;font-size:8.4px;color:#3f444a;letter-spacing:0.022px">Threshold angle</span>
<span class="t" style="left:130.5px;top:321.29px;font-size:8.4px;color:#33383d;letter-spacing:-0.164px">30</span>
<span class="t" style="left:176.6px;top:321.47px;font-size:7px;color:#777">°</span>
<span class="t" style="left:-1.2px;top:337.49px;font-size:8.4px;color:#3f444a;letter-spacing:0.064px">On build plate only</span>
<span class="t" style="left:-1.2px;top:353.69px;font-size:8.4px;color:#3f444a;letter-spacing:0.093px">Support critical regions only</span>
<span class="t" style="left:-1.2px;top:369.69px;font-size:8.4px;color:#3f444a;letter-spacing:-0.059px">Remove small overhangs</span>
<span class="t" style="left:1px;top:387.57px;font-size:8.3px;color:#262a2e;font-weight:700;letter-spacing:-0.035px">Raft</span>
<span class="t" style="left:-1.2px;top:405.49px;font-size:8.4px;color:#3f444a;letter-spacing:-0.039px">Raft layers</span>
<span class="t" style="left:130.7px;top:405.49px;font-size:8.4px;color:#33383d">0</span>
<span class="t" style="left:162.5px;top:406.61px;font-size:6.6px;color:#9a9a9a;letter-spacing:-0.099px">layers</span>
<span class="t" style="left:1px;top:423.77px;font-size:8.3px;color:#262a2e;font-weight:700;letter-spacing:-0.224px">Filament for Supports</span>
<span class="t" style="left:-1.2px;top:441.29px;font-size:8.4px;color:#3f444a;letter-spacing:0.150px">Support/raft base</span>
<span class="t" style="left:129px;top:441.29px;font-size:8.4px;color:#33383d;letter-spacing:0.093px">Default</span>
<span class="t" style="left:-1.2px;top:457.29px;font-size:8.4px;color:#3f444a;letter-spacing:0.190px">Support/raft interface</span>
<span class="t" style="left:129px;top:457.29px;font-size:8.4px;color:#33383d;letter-spacing:0.093px">Default</span>
<span class="t" style="left:1px;top:475.57px;font-size:8.3px;color:#262a2e;font-weight:700;letter-spacing:-0.332px">Advanced</span>
<span class="t" style="left:-1.2px;top:492.99px;font-size:8.4px;color:#3f444a;letter-spacing:0.090px">Initial layer density</span>
<span class="t" style="left:121.8px;top:492.49px;font-size:8.4px;color:#33383d;letter-spacing:0.036px">90</span>
<span class="t" style="left:172px;top:493.64px;font-size:6.8px;color:#8a8a8a">%</span>
<span class="t" style="left:-1.2px;top:509.09px;font-size:8.4px;color:#3f444a;letter-spacing:0.028px">Initial layer expansion</span>
<span class="t" style="left:121.8px;top:509.09px;font-size:8.4px;color:#33383d">2</span>
<span class="t" style="left:166.2px;top:510.24px;font-size:6.8px;color:#9a9a9a;letter-spacing:-0.264px">mm</span>
<span class="t" style="left:-1.2px;top:524.89px;font-size:8.4px;color:#3f444a;letter-spacing:0.120px">Support wall loops</span>
<span class="t" style="left:130.7px;top:524.89px;font-size:8.4px;color:#33383d">0</span>
<span class="t" style="left:-1.2px;top:541.09px;font-size:8.4px;color:#3f444a;letter-spacing:0.038px">Top Z distance</span>
<span class="t" style="left:121.8px;top:541.09px;font-size:8.4px;color:#33383d;letter-spacing:-0.152px">0.2</span>
<span class="t" style="left:166.2px;top:542.24px;font-size:6.8px;color:#9a9a9a;letter-spacing:-0.264px">mm</span>
<span class="t" style="left:-1.2px;top:557.29px;font-size:8.4px;color:#3f444a;letter-spacing:0.088px">Bottom Z distance</span>
<span class="t" style="left:121.8px;top:557.29px;font-size:8.4px;color:#33383d;letter-spacing:-0.152px">0.2</span>
<span class="t" style="left:166.2px;top:558.44px;font-size:6.8px;color:#9a9a9a;letter-spacing:-0.264px">mm</span>
<span class="t" style="left:-1.2px;top:574.69px;font-size:8.4px;color:#3f444a;letter-spacing:-0.125px">Base pattern</span>
<span class="t" style="left:129px;top:574.69px;font-size:8.4px;color:#33383d;letter-spacing:0.093px">Default</span></aside>
<header><div style="left:0px;top:6.3px;width:1019.4px;height:17px;background:#262b2e;border-top:1px solid #15181a;border-right:1px solid #15181a;box-sizing:border-box"></div>
<div style="left:0px;top:23.3px;width:1019.4px;height:18.9px;background:#3b4446"></div>
<div style="left:81px;top:23.3px;width:73px;height:18.9px;background:#1fad4a"></div>
<svg style="left:-2px;top:10.5px;" width="4" height="8" viewBox="0 0 4 8"><path d="M0 1 H3 M0 4 H3 M0 7 H3" stroke="#fff" stroke-width="1.1"/></svg>
<svg style="left:25.5px;top:13px;" width="6.5" height="4.5" viewBox="0 0 6.5 4.5"><path d="M0.6 0.6 L3.25 3.3 L5.9 0.6" fill="none" stroke="#fff" stroke-width="1.1"/></svg>
<div style="left:42px;top:8.5px;width:0.8px;height:12.5px;background:#4a5052"></div>
<svg style="left:55px;top:10.5px;" width="9" height="9" viewBox="0 0 9 9"><path d="M0.7 0.7 H6.2 L8.3 2.8 V8.3 H0.7 Z" fill="none" stroke="#fff" stroke-width="1.2"/><rect x="2" y="5" width="5" height="3.3" fill="#fff"/><rect x="2.2" y="0.7" width="3.4" height="2.2" fill="#fff"/></svg>
<svg style="left:76px;top:11px;" width="9.5" height="8" viewBox="0 0 9.5 8"><path d="M4.2 0.3 L0.3 3.6 L4.2 6.9 V4.9 Q7.4 4.7 9.2 7.6 Q8.6 2.6 4.2 2.3 Z" fill="#8d9294"/></svg>
<svg style="left:97px;top:11px;" width="9.5" height="8" viewBox="0 0 9.5 8"><path d="M5.3 0.3 L9.2 3.6 L5.3 6.9 V4.9 Q2.1 4.7 0.3 7.6 Q0.9 2.6 5.3 2.3 Z" fill="#8d9294"/></svg>
<svg style="left:970px;top:13.4px;" width="7" height="1.4" viewBox="0 0 7 1.4"><rect width="7" height="1.2" fill="#e8e8e8"/></svg>
<svg style="left:986.6px;top:11px;" width="9.5" height="8" viewBox="0 0 9.5 8"><rect x="0.6" y="0.6" width="5.6" height="4.6" rx="1.2" fill="none" stroke="#e8e8e8" stroke-width="1"/><rect x="3.2" y="2.8" width="5.6" height="4.6" rx="1.2" fill="#262b2e" stroke="#e8e8e8" stroke-width="1"/></svg>
<svg style="left:1006.5px;top:12px;" width="6" height="6" viewBox="0 0 6 6"><path d="M0.5 0.5 L5.5 5.5 M5.5 0.5 L0.5 5.5" stroke="#e8e8e8" stroke-width="1.1"/></svg>
<svg style="left:-2px;top:27px;" width="4" height="11" viewBox="0 0 4 11"><rect x="0" y="3" width="3.4" height="8" fill="#fff"/></svg>
<svg style="left:22.5px;top:28px;" width="9.5" height="10" viewBox="0 0 9.5 10"><path d="M4.75 0.7 L8.8 2.9 V7.1 L4.75 9.3 L0.7 7.1 V2.9 Z M0.9 3 L4.75 5 L8.6 3" fill="none" stroke="#fff" stroke-width="0.9" stroke-linejoin="round"/></svg>
<svg style="left:96px;top:28px;" width="9.5" height="10" viewBox="0 0 9.5 10"><path d="M4.75 0.7 L8.8 2.6 L4.75 4.5 L0.7 2.6 Z M0.7 4.6 L4.75 6.5 L8.8 4.6 M0.7 6.6 L4.75 8.5 L8.8 6.6 M0.7 2.6 V6.6 M8.8 2.6 V6.6" fill="none" stroke="#eafbe9" stroke-width="0.85" stroke-linejoin="round"/></svg>
<svg style="left:170.5px;top:28px;" width="10.5" height="10" viewBox="0 0 10.5 10"><rect x="0.5" y="0.6" width="4.2" height="3" fill="none" stroke="#fff" stroke-width="0.9"/><rect x="5.8" y="6" width="4.2" height="3.2" fill="none" stroke="#fff" stroke-width="0.9"/><path d="M7 0.8 H9.6 V3.6 M3.4 9 H0.9 V6.2" fill="none" stroke="#fff" stroke-width="0.9"/></svg>
<svg style="left:244px;top:28.3px;" width="9.5" height="9.5" viewBox="0 0 9.5 9.5"><rect x="0.6" y="0.6" width="8.3" height="8.3" rx="0.8" fill="none" stroke="#fff" stroke-width="0.9"/><path d="M0.6 3 H8.9 M4.6 3 V8.9 M5.6 5 H8 M5.6 6.8 H8" stroke="#fff" stroke-width="0.8" fill="none"/></svg>
<svg style="left:310.5px;top:29.2px;" width="7.5" height="7.5" viewBox="0 0 7.5 7.5"><path d="M3.75 0.5 L6.6 2.1 V5.4 L3.75 7 L0.9 5.4 V2.1 Z" fill="none" stroke="#fff" stroke-width="0.9" stroke-linejoin="round"/><circle cx="3.75" cy="3.75" r="1.1" fill="#fff"/></svg>
<div style="left:845.5px;top:26px;width:72.2px;height:13.3px;background:#6e6e6e;border-radius:6.7px"></div>
<div style="left:845.5px;top:26px;width:12.6px;height:13.3px;background:#1fad4a;border-radius:6.7px 0 0 6.7px"></div>
<svg style="left:849.5px;top:31.3px;" width="5" height="3.4" viewBox="0 0 5 3.4"><path d="M0.5 0.5 L2.5 2.6 L4.5 0.5" fill="none" stroke="#d8f0dc" stroke-width="0.9"/></svg>
<div style="left:925.6px;top:26px;width:73.8px;height:13.3px;background:#1fad4a;border-radius:6.7px"></div>
<div style="left:938.8px;top:26px;width:0.9px;height:13.3px;background:#3b4446"></div>
<svg style="left:929.8px;top:31.3px;" width="5" height="3.4" viewBox="0 0 5 3.4"><path d="M0.5 0.5 L2.5 2.6 L4.5 0.5" fill="none" stroke="#d8f0dc" stroke-width="0.9"/></svg>
<span class="t" style="left:3.7px;top:10.98px;font-size:7.7px;color:#fff;font-weight:700;transform-origin:0 0;transform:scaleX(0.7245)">File</span>
<span class="t" style="left:519.5px;top:11.34px;font-size:7.4px;color:#f0f0f0;letter-spacing:-0.133px">Untitled</span>
<span class="t" style="left:37.5px;top:29.04px;font-size:8.7px;color:#fff;letter-spacing:-0.203px">Prepare</span>
<span class="t" style="left:110.7px;top:29.04px;font-size:8.7px;color:#fff;letter-spacing:-0.201px">Preview</span>
<span class="t" style="left:186.2px;top:29.04px;font-size:8.7px;color:#fff;letter-spacing:-0.377px">Device</span>
<span class="t" style="left:258.6px;top:29.04px;font-size:8.7px;color:#fff;letter-spacing:-0.150px">Project</span>
<span class="t" style="left:324.3px;top:29.04px;font-size:8.7px;color:#fff;letter-spacing:-0.003px">Calibration</span>
<span class="t" style="left:866.8px;top:28.92px;font-size:8.6px;color:#9b9b9b;letter-spacing:-0.105px">Slice plate</span>
<span class="t" style="left:947.5px;top:28.92px;font-size:8.6px;color:#fff;letter-spacing:0.072px">Print plate</span></header>
<footer><div style="left:-10px;top:225.5px;width:225.5px;height:116.3px;border:4.3px solid #ec008c;box-sizing:border-box"></div>
<div style="left:156.9px;top:145.8px;width:304.4px;height:38px;background:#ec008c"></div>
<span class="t" style="left:175.2px;top:151.71px;font-size:24.2px;color:#0a0a0a;transform-origin:0 0;transform:scaleX(0.9622)">Please turn on the support</span></footer>
</div></body></html>
